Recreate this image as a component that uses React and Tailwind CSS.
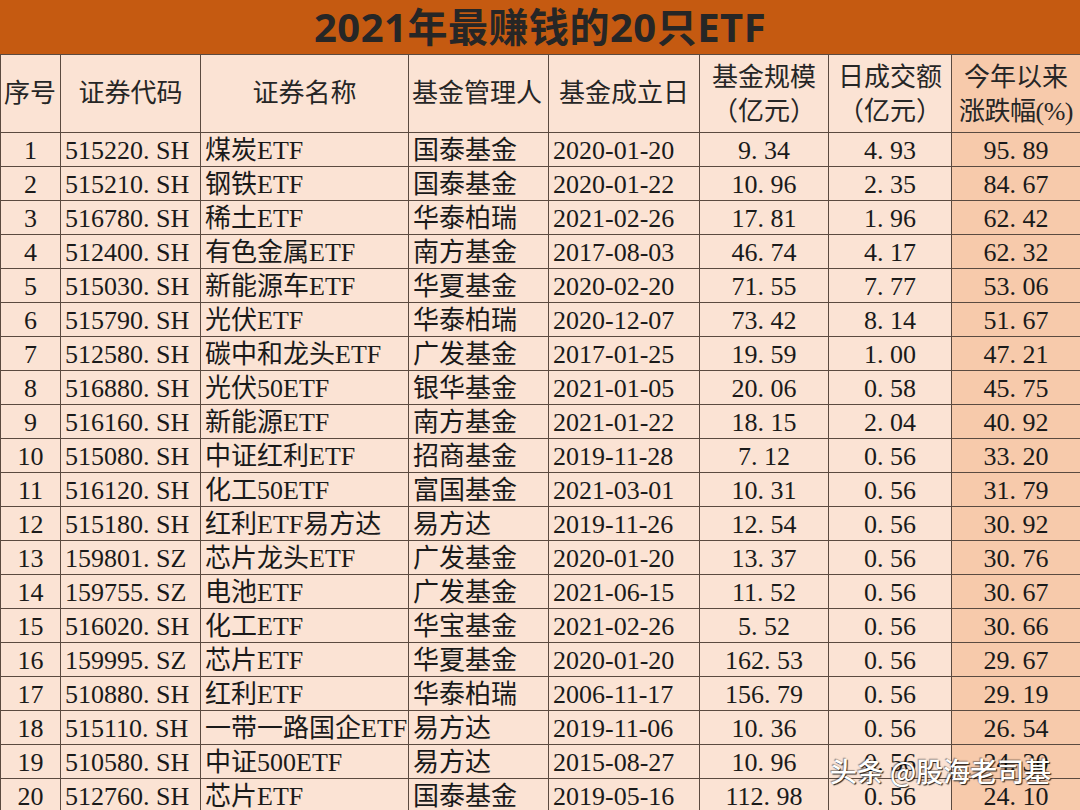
import React from "react";

const rows = [
  ["1", "515220.SH", "煤炭ETF", "国泰基金", "2020-01-20", "9.34", "4.93", "95.89"],
  ["2", "515210.SH", "钢铁ETF", "国泰基金", "2020-01-22", "10.96", "2.35", "84.67"],
  ["3", "516780.SH", "稀土ETF", "华泰柏瑞", "2021-02-26", "17.81", "1.96", "62.42"],
  ["4", "512400.SH", "有色金属ETF", "南方基金", "2017-08-03", "46.74", "4.17", "62.32"],
  ["5", "515030.SH", "新能源车ETF", "华夏基金", "2020-02-20", "71.55", "7.77", "53.06"],
  ["6", "515790.SH", "光伏ETF", "华泰柏瑞", "2020-12-07", "73.42", "8.14", "51.67"],
  ["7", "512580.SH", "碳中和龙头ETF", "广发基金", "2017-01-25", "19.59", "1.00", "47.21"],
  ["8", "516880.SH", "光伏50ETF", "银华基金", "2021-01-05", "20.06", "0.58", "45.75"],
  ["9", "516160.SH", "新能源ETF", "南方基金", "2021-01-22", "18.15", "2.04", "40.92"],
  ["10", "515080.SH", "中证红利ETF", "招商基金", "2019-11-28", "7.12", "0.56", "33.20"],
  ["11", "516120.SH", "化工50ETF", "富国基金", "2021-03-01", "10.31", "0.56", "31.79"],
  ["12", "515180.SH", "红利ETF易方达", "易方达", "2019-11-26", "12.54", "0.56", "30.92"],
  ["13", "159801.SZ", "芯片龙头ETF", "广发基金", "2020-01-20", "13.37", "0.56", "30.76"],
  ["14", "159755.SZ", "电池ETF", "广发基金", "2021-06-15", "11.52", "0.56", "30.67"],
  ["15", "516020.SH", "化工ETF", "华宝基金", "2021-02-26", "5.52", "0.56", "30.66"],
  ["16", "159995.SZ", "芯片ETF", "华夏基金", "2020-01-20", "162.53", "0.56", "29.67"],
  ["17", "510880.SH", "红利ETF", "华泰柏瑞", "2006-11-17", "156.79", "0.56", "29.19"],
  ["18", "515110.SH", "一带一路国企ETF", "易方达", "2019-11-06", "10.36", "0.56", "26.54"],
  ["19", "510580.SH", "中证500ETF", "易方达", "2015-08-27", "10.96", "0.56", "24.30"],
  ["20", "512760.SH", "芯片ETF", "国泰基金", "2019-05-16", "112.98", "0.56", "24.10"],
];

const sp = (s) => s.replace(".", ". ");

const cell =
  "h-[34px] border-r border-b border-[#5b4a40] flex items-center whitespace-nowrap overflow-hidden text-[26px] leading-none text-[#1a1a1a]";
const hcell =
  "h-[78px] border-r border-b border-[#5b4a40] flex flex-col justify-center whitespace-nowrap overflow-hidden text-[26px] leading-[34px] text-[#262626]";

export default function App() {
  return (
    <div
      className="relative w-[1080px] h-[810px] overflow-hidden bg-[#fbe3d4]"
      style={{ fontFamily: '"Liberation Serif", "Noto Sans CJK SC", serif' }}
    >
      <div
        className="h-[55px] bg-[#c55a11] border-b border-[#5b4a40] flex items-center justify-center text-[40px] font-bold text-[#262626] tracking-[0.5px]"
        style={{ fontFamily: '"Noto Sans", "Noto Sans CJK SC", sans-serif' }}
      >
        2021年最赚钱的20只ETF
      </div>
      <div className="grid grid-cols-[60px_140px_208px_140px_151px_129px_123px_129px] border-l border-[#5b4a40]">
        <div className={`${hcell} items-start pl-[3px]`}>序号</div>
        <div className={`${hcell} items-center`}>证券代码</div>
        <div className={`${hcell} items-center`}>证券名称</div>
        <div className={`${hcell} items-start pl-[3px]`}>基金管理人</div>
        <div className={`${hcell} items-center`}>基金成立日</div>
        <div className={`${hcell} items-center pt-[2px]`}>
          <span>基金规模</span>
          <span>（亿元）</span>
        </div>
        <div className={`${hcell} items-center pt-[2px]`}>
          <span>日成交额</span>
          <span>（亿元）</span>
        </div>
        <div className={`${hcell} items-center pt-[2px] bg-[#f7caab]`}>
          <span>今年以来</span>
          <span className="tracking-[-0.5px]">涨跌幅(%)</span>
        </div>
        {rows.map((r) => (
          <React.Fragment key={r[0]}>
            <div className={`${cell} justify-center pt-[3px]`}>{r[0]}</div>
            <div className={`${cell} pl-[4px] pt-[3px]`}>{sp(r[1])}</div>
            <div className={`${cell} pl-[4px] pt-[3px]`}>{r[2]}</div>
            <div className={`${cell} pl-[4px] pt-[3px]`}>{r[3]}</div>
            <div className={`${cell} pl-[4px] pt-[3px]`}>{r[4]}</div>
            <div className={`${cell} justify-center pt-[3px]`}>{sp(r[5])}</div>
            <div className={`${cell} justify-center pt-[3px]`}>{sp(r[6])}</div>
            <div className={`${cell} justify-center pt-[3px] bg-[#f7caab]`}>{sp(r[7])}</div>
          </React.Fragment>
        ))}
      </div>
      <div
        className="absolute left-[830px] top-[751px] text-[27px] font-medium text-white [text-shadow:1px_1px_1px_rgba(0,0,0,0.85),-1px_-1px_1px_rgba(0,0,0,0.4)]"
        style={{ fontFamily: '"Noto Sans CJK SC", sans-serif' }}
      >
        头条 @股海老司基
      </div>
    </div>
  );
}
